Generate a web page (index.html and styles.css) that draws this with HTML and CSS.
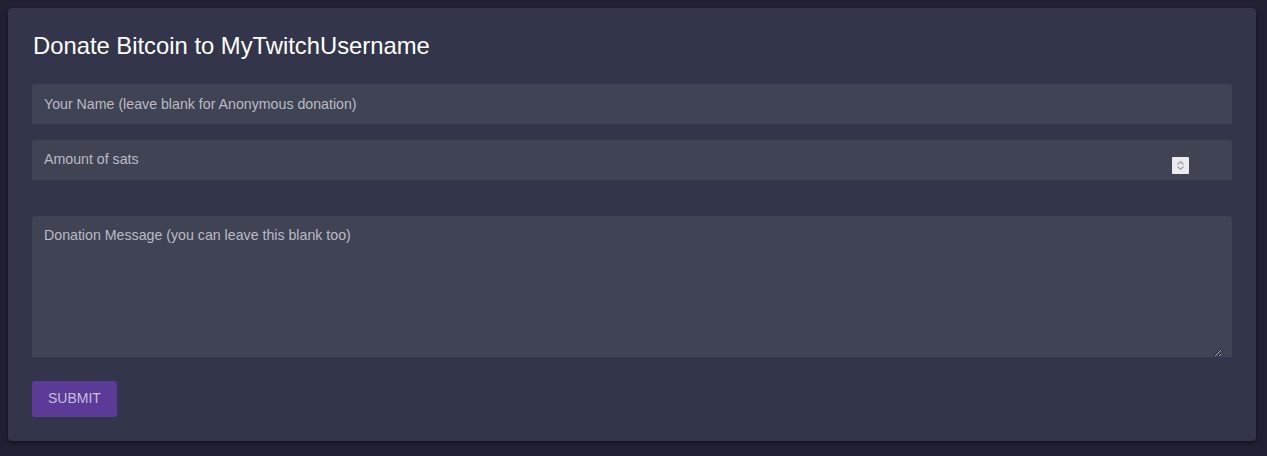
FILE: index.html
```html
<!doctype html>
<html lang="en-US">
  <head>
    <meta charset="utf-8" />
    <title>Donate Bitcoin</title>
    <meta name="viewport" content="width=device-width, initial-scale=1" />
    <link rel="stylesheet" href="styles.css">
  </head>
  <body>
    <div class="card">
      <h1>Donate Bitcoin to MyTwitchUsername</h1>
      <form id="donate-form">
        <div class="field">
          <input type="text" name="name" placeholder="Your Name (leave blank for Anonymous donation)" />
        </div>
        <div class="field field-number">
          <input type="number" name="sats" placeholder="Amount of sats" />
          <span class="spin" aria-hidden="true">
            <svg width="17" height="17" viewBox="0 0 17 17">
              <path d="M5.5 7.5 L8.5 4.5 L11.5 7.5" fill="none" stroke="#9b9bab" stroke-width="1.2" />
              <path d="M5.5 9.5 L8.5 12.5 L11.5 9.5" fill="none" stroke="#9b9bab" stroke-width="1.2" />
            </svg>
          </span>
        </div>
        <div class="field field-text">
          <textarea name="message" placeholder="Donation Message (you can leave this blank too)"></textarea>
        </div>
        <button type="submit">Submit</button>
      </form>
    </div>
  </body>
</html>
```

FILE: styles.css
```css
* {
  box-sizing: border-box;
  font-family: "Liberation Sans", Arial, sans-serif;
  margin: 0;
  padding: 0;
}

body {
  background: #1f2133;
  padding: 8px 11px 8px 8px;
}

.card {
  background: #33364a;
  border-radius: 4px;
  padding: 24px;
  box-shadow: 0 2px 4px rgba(0, 0, 0, 0.45);
}

h1 {
  color: #ffffff;
  font-size: 23.8px;
  font-weight: 400;
  line-height: 28px;
  margin: 0 0 24px 1px;
}

.field {
  position: relative;
  background: #404354;
  border-radius: 4px 4px 0 0;
  margin-bottom: 16px;
}

.field-number {
  margin-bottom: 36px;
}

input,
textarea {
  display: block;
  width: 100%;
  background: transparent;
  border: 0;
  outline: 0;
  color: #e4e5ea;
  font-size: 14.2px;
  padding: 0 12px;
  height: 40px;
}

input::placeholder,
textarea::placeholder {
  color: #b9bbc5;
  opacity: 1;
}

.field-number input {
  padding-bottom: 2px;
}

input[type="number"]::-webkit-inner-spin-button,
input[type="number"]::-webkit-outer-spin-button {
  -webkit-appearance: none;
  margin: 0;
}

.spin {
  position: absolute;
  right: 43px;
  top: 17px;
  width: 17px;
  height: 17px;
  background: #ececf0;
  border-radius: 1px;
}

.spin svg {
  display: block;
}

.field-text {
  padding-right: 10px;
}

.field-text textarea {
  height: 141px;
  padding: 11px 2px 12px 12px;
  resize: vertical;
  line-height: 16px;
}

button {
  display: block;
  background: #5b3a98;
  color: #c6bedc;
  border: 0;
  border-radius: 3px;
  font-size: 14px;
  text-transform: uppercase;
  padding: 0 16px 3px;
  height: 36px;
  margin-top: 24px;
  cursor: pointer;
}
```
